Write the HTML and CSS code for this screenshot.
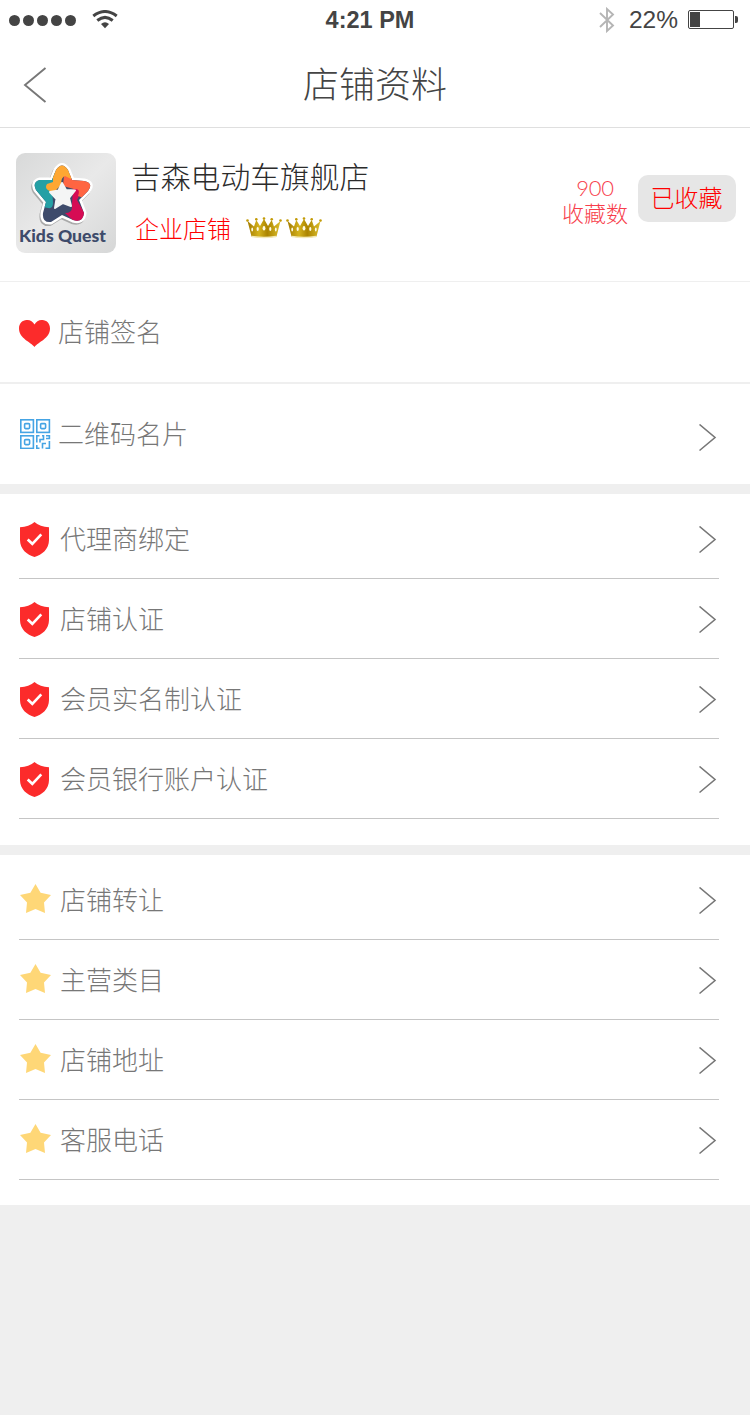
FILE: index.html
```html
<!DOCTYPE html>
<html lang="zh-CN">
<head>
    <meta charset="UTF-8">
    <meta name="viewport" content="width=device-width, initial-scale=1.0">
    <title>店铺资料</title>
    <link rel="stylesheet" href="styles.css">
</head>
<body>
    <svg class="sprite" width="0" height="0">
        <symbol id="arrow" viewBox="0 0 18 28">
            <path d="M0.5 0.5 L16 13.5 L0.5 26.5" fill="none" stroke="#777" stroke-width="1.6"/>
        </symbol>
        <symbol id="shield" viewBox="0 0 29 35">
            <path d="M14.5 0 Q20 5 29 5.2 V18 C29 27 22 33 14.5 35 C7 33 0 27 0 18 V5.2 Q9 5 14.5 0 Z" fill="#fc2b2b"/>
            <path d="M7.7 17.5 L12.3 21.8 L21.3 12.3" fill="none" stroke="#fff" stroke-width="2.6"/>
        </symbol>
        <symbol id="star" viewBox="0 0 31 29">
            <path d="M15.5 0 L20.6 8.8 L31 11 L24 18.5 L25 29 L15.5 25 L6 29 L7 18.5 L0 11 L10.4 8.8 Z" fill="#fed777"/>
        </symbol>
        <symbol id="crown" viewBox="0 0 36 22">
            <path d="M5.5 19.5 L1.5 4 L8 9.5 L10.3 3 L14 9 L18 2 L22 9 L25.7 3 L28 9.5 L34.5 4 L30.5 19.5 Q18 22 5.5 19.5 Z" fill="url(#gold)"/>
            <g fill="#c39b08">
                <circle cx="1.5" cy="3.5" r="1.3"/>
                <circle cx="10.3" cy="2.3" r="1.3"/>
                <circle cx="18" cy="1.5" r="1.3"/>
                <circle cx="25.7" cy="2.3" r="1.3"/>
                <circle cx="34.5" cy="3.5" r="1.3"/>
            </g>
            <g fill="#fffbe8">
                <ellipse cx="18" cy="11.3" rx="1.4" ry="2.3"/>
                <ellipse cx="11.7" cy="12" rx="1.1" ry="2.1"/>
                <ellipse cx="24.3" cy="12" rx="1.1" ry="2.1"/>
                <ellipse cx="6.2" cy="12.5" rx="0.9" ry="1.9"/>
                <ellipse cx="29.8" cy="12.5" rx="0.9" ry="1.9"/>
            </g>
            <path d="M6 19.5 Q18 21.5 30 19.5" fill="none" stroke="#f3e9b8" stroke-width="1.4"/>
        </symbol>
        <linearGradient id="gold" x1="0" x2="1" y1="0" y2="0">
            <stop offset="0" stop-color="#a37b00"/>
            <stop offset="0.35" stop-color="#d4b21c"/>
            <stop offset="0.6" stop-color="#ab8400"/>
            <stop offset="1" stop-color="#dcbe2c"/>
        </linearGradient>
    </svg>

    <div class="status-bar">
        <div class="signal">
            <span class="dot"></span>
            <span class="dot"></span>
            <span class="dot"></span>
            <span class="dot"></span>
            <span class="dot"></span>
            <svg class="wifi" width="26" height="19" viewBox="0 0 26 19">
                <path d="M1.3 6 Q13 -3 24.7 6" fill="none" stroke="#444" stroke-width="3"/>
                <path d="M5.3 10.5 Q13 4.2 20.7 10.5" fill="none" stroke="#444" stroke-width="3"/>
                <path d="M9 14 Q13 10.5 17 14 L13 18.3 Z" fill="#444"/>
            </svg>
        </div>
        <div class="time">4:21 PM</div>
        <div class="power">
            <svg width="16" height="26" viewBox="0 0 16 26">
                <path d="M1 6 L14 18.5 L8 24 V2 L14 7.5 L1 20" fill="none" stroke="#b5b5b5" stroke-width="1.9"/>
            </svg>
            <span class="percent">22%</span>
            <svg width="50" height="20" viewBox="0 0 50 20">
                <rect x="0.5" y="0.5" width="45" height="18" rx="1.5" fill="none" stroke="#444"/>
                <rect x="2" y="2" width="10" height="15" fill="#444"/>
                <path d="M47 6 H48 Q50 6 50 8 V11 Q50 13 48 13 H47 Z" fill="#444"/>
            </svg>
        </div>
    </div>

    <header class="nav">
        <svg class="back" width="24" height="36" viewBox="0 0 24 36">
            <path d="M22.5 1 L2 18 L22.5 35" fill="none" stroke="#777" stroke-width="1.9"/>
        </svg>
        <h1>店铺资料</h1>
    </header>

    <section class="profile">
        <svg class="logo" width="100" height="100" viewBox="0 0 100 100">
            <defs>
                <linearGradient id="tile" x1="0" y1="0" x2="1" y2="1">
                    <stop offset="0" stop-color="#d8d9d9"/>
                    <stop offset="0.5" stop-color="#e9e9e9"/>
                    <stop offset="1" stop-color="#d6d7d7"/>
                </linearGradient>
                <clipPath id="starShape">
                    <path id="starPath" d="M40 17 Q46 8 52 17 L56 27 L68 28 Q78 30 72 38 L63 47 L68 60 Q67 70 57 67 L46 62 L35 69 Q26 70 27 60 L30 49 L20 37 Q16 29 24 27 L36 27 Z"/>
                </clipPath>
            </defs>
            <rect width="100" height="100" rx="9" fill="url(#tile)"/>
            <use href="#starPath" transform="translate(-1 1.5)" fill="#aaa" stroke="#aaa" stroke-width="5" stroke-linejoin="round"/>
            <use href="#starPath" fill="#fff" stroke="#fff" stroke-width="5" stroke-linejoin="round"/>
            <g clip-path="url(#starShape)">
                <rect width="100" height="100" fill="#3e4b6b"/>
                <path d="M0 20 H40 L36 34 L37 50 Q37 56 32 55 L27 54 L0 50 Z" fill="#25a0a5"/>
                <path d="M57 34 H63 Q66 36 64 41 L61 47 L74 70 H60 L49 60 Q57 60 56 52 Z" fill="#d60c54"/>
                <path d="M48 22 L80 20 L76 48 L62 43 Q65 35 58 36 L47 33 Z" fill="#ff6542"/>
                <path d="M36 0 H60 L55 26 L49 23 Q45 24 45 32 L39 38 H34 Q28 36 31 31 L37 29 Z" fill="#fea733"/>
            </g>
            <path d="M46 30 L50 37 L59 37.5 L53 45 L55 53 L47 50 L39 55 L40.5 46 L34 39 L42.5 37.5 Z" fill="#f4f5f5" stroke="#f4f5f5" stroke-width="2" stroke-linejoin="round"/>
            <text class="logo-text" x="3" y="89" textLength="87" lengthAdjust="spacingAndGlyphs">Kids Quest</text>
        </svg>
        <div class="shop">
            <h2>吉森电动车旗舰店</h2>
            <div class="level">
                <span>企业店铺</span>
                <svg width="36" height="22"><use href="#crown"/></svg>
                <svg width="36" height="22"><use href="#crown"/></svg>
            </div>
        </div>
        <div class="count">
            <span class="number">900</span>
            <span>收藏数</span>
        </div>
        <button type="button">已收藏</button>
    </section>

    <section class="cards">
        <div class="card">
            <svg class="icon heart" width="31" height="27" viewBox="0 0 31 27">
                <path d="M15.5 27 C12 22 0 18.5 0 8.5 C0 -1.5 12 -2.5 15.5 4.5 C19 -2.5 31 -1.5 31 8.5 C31 18.5 19 22 15.5 27 Z" fill="#fc2b2b"/>
            </svg>
            <span>店铺签名</span>
        </div>
        <div class="card">
            <svg class="icon qr" width="32" height="30" viewBox="0 0 32 30">
                <g fill="none" stroke="#45a4e4" stroke-width="1.6">
                    <rect x="1.8" y="0.8" width="12.6" height="12.6"/>
                    <rect x="5.6" y="4.6" width="5" height="5" rx="1"/>
                    <rect x="17.8" y="0.8" width="12.6" height="12.6"/>
                    <rect x="21.6" y="4.6" width="5" height="5" rx="1"/>
                    <rect x="1.8" y="16.8" width="12.6" height="12.6"/>
                    <rect x="5.6" y="20.6" width="5" height="5" rx="1"/>
                    <path d="M17.8 23.5 V16.8 H20.5 M23 16.8 H24.5 V20.5 H21 V23.5 M27 16.8 H30.4 V19.5 H27 M17.8 26 V29.4 H20.5 M23.5 29.4 V24.5 H27 M30.4 22 V29.4 H26.5"/>
                </g>
            </svg>
            <span>二维码名片</span>
            <svg class="arrow" width="18" height="28"><use href="#arrow"/></svg>
        </div>
    </section>

    <ul class="list">
        <li>
            <svg class="icon" width="29" height="35"><use href="#shield"/></svg>
            <span>代理商绑定</span>
            <svg class="arrow" width="18" height="28"><use href="#arrow"/></svg>
        </li>
        <li>
            <svg class="icon" width="29" height="35"><use href="#shield"/></svg>
            <span>店铺认证</span>
            <svg class="arrow" width="18" height="28"><use href="#arrow"/></svg>
        </li>
        <li>
            <svg class="icon" width="29" height="35"><use href="#shield"/></svg>
            <span>会员实名制认证</span>
            <svg class="arrow" width="18" height="28"><use href="#arrow"/></svg>
        </li>
        <li>
            <svg class="icon" width="29" height="35"><use href="#shield"/></svg>
            <span>会员银行账户认证</span>
            <svg class="arrow" width="18" height="28"><use href="#arrow"/></svg>
        </li>
    </ul>

    <ul class="list last">
        <li>
            <svg class="icon star" width="31" height="29"><use href="#star"/></svg>
            <span>店铺转让</span>
            <svg class="arrow" width="18" height="28"><use href="#arrow"/></svg>
        </li>
        <li>
            <svg class="icon star" width="31" height="29"><use href="#star"/></svg>
            <span>主营类目</span>
            <svg class="arrow" width="18" height="28"><use href="#arrow"/></svg>
        </li>
        <li>
            <svg class="icon star" width="31" height="29"><use href="#star"/></svg>
            <span>店铺地址</span>
            <svg class="arrow" width="18" height="28"><use href="#arrow"/></svg>
        </li>
        <li>
            <svg class="icon star" width="31" height="29"><use href="#star"/></svg>
            <span>客服电话</span>
            <svg class="arrow" width="18" height="28"><use href="#arrow"/></svg>
        </li>
    </ul>
</body>
</html>
```
FILE: styles.css
```css
* {
    box-sizing: border-box;
}
body {
    margin: 0;
    background-color: #efefef;
    color: #777;
    font-family: "Noto Sans CJK SC", sans-serif;
    font-weight: 300;
    font-size: 26px;
}
h1, h2, ul {
    margin: 0;
    padding: 0;
    font-weight: 300;
}
svg {
    display: block;
    flex-shrink: 0;
}
.sprite {
    position: absolute;
}

/* Status bar */
.status-bar {
    display: grid;
    grid-template-columns: 1fr auto 1fr;
    align-items: center;
    height: 40px;
    padding: 0 12px 0 9px;
    background-color: #fff;
    color: #444;
    font-family: "Liberation Sans", Arial, sans-serif;
    font-size: 24px;
    font-weight: 400;
}
.signal {
    display: flex;
    align-items: center;
    gap: 3px;
}
.dot {
    width: 11px;
    height: 11px;
    border-radius: 50%;
    background-color: #444;
}
.wifi {
    margin: -2px 0 0 13px;
}
.time {
    margin-right: 7px;
    font-weight: bold;
    font-size: 23.5px;
}
.power {
    display: flex;
    align-items: center;
    justify-content: flex-end;
}
.percent {
    margin: 0 10px 0 14px;
    font-size: 24.5px;
}

/* Title bar */
.nav {
    display: grid;
    grid-template-columns: 1fr auto 1fr;
    align-items: center;
    height: 88px;
    padding: 0 23px;
    border-bottom: 1px solid #dfdfdf;
    background-color: #fff;
}
.nav h1 {
    padding-bottom: 4px;
    color: #444;
    font-size: 36px;
    line-height: 52px;
}
.back {
    margin-top: 3px;
}

/* Shop summary */
.profile {
    display: flex;
    align-items: flex-start;
    height: 154px;
    padding: 25px 14px 0 16px;
    border-bottom: 1px solid #efefef;
    background-color: #fff;
}
.logo-text {
    fill: #3e4b6b;
    font-family: "Lato", sans-serif;
    font-size: 17px;
    font-weight: 900;
}
.shop {
    flex: 1;
    padding-left: 15px;
}
.shop h2 {
    color: #2b2b2b;
    font-size: 29.8px;
    line-height: 44px;
}
.level {
    display: flex;
    align-items: center;
    gap: 4px;
    margin-top: 14px;
    padding-left: 4px;
    color: #f00;
    font-size: 24px;
    line-height: 34px;
}
.level span {
    margin-right: 11px;
}
.count {
    display: flex;
    flex-direction: column;
    align-items: center;
    margin: 22px 10px 0 0;
    color: #f73e4c;
    font-size: 22px;
    line-height: 25px;
}
.number {
    font-family: "Lato", sans-serif;
    font-weight: 300;
    letter-spacing: -0.3px;
}
button {
    width: 98px;
    height: 47px;
    margin-top: 22px;
    padding: 0 1px 4px 0;
    border: none;
    border-radius: 10px;
    background-color: #e6e6e6;
    color: #f00;
    font-family: inherit;
    font-size: 24px;
    font-weight: 300;
}

/* Rows */
.card {
    display: flex;
    align-items: center;
    height: 100px;
    padding: 0 33px 0 19px;
    background-color: #fff;
}
.card + .card {
    margin-top: 2px;
}
.card .icon {
    margin-right: 8px;
}
.card .heart {
    margin-top: 2px;
}
.card .qr {
    margin-right: 7px;
}
.card .arrow {
    margin-top: 7px;
}
.card span, .list span {
    padding-bottom: 4px;
}
.list {
    margin-bottom: 10px;
    padding: 5px 31px 26px 19px;
    background-color: #fff;
    list-style: none;
}
.list.last {
    margin-bottom: 0;
    padding-bottom: 25px;
}
.cards {
    margin-bottom: 10px;
}
.list li {
    display: flex;
    align-items: center;
    height: 80px;
    padding: 2px 2px 0 1px;
    border-bottom: 1px solid #c5c5c5;
}
.list .icon {
    margin-right: 11px;
}
.list .star {
    margin: 0 9px 4px 0;
}
.arrow {
    margin-left: auto;
}
```
